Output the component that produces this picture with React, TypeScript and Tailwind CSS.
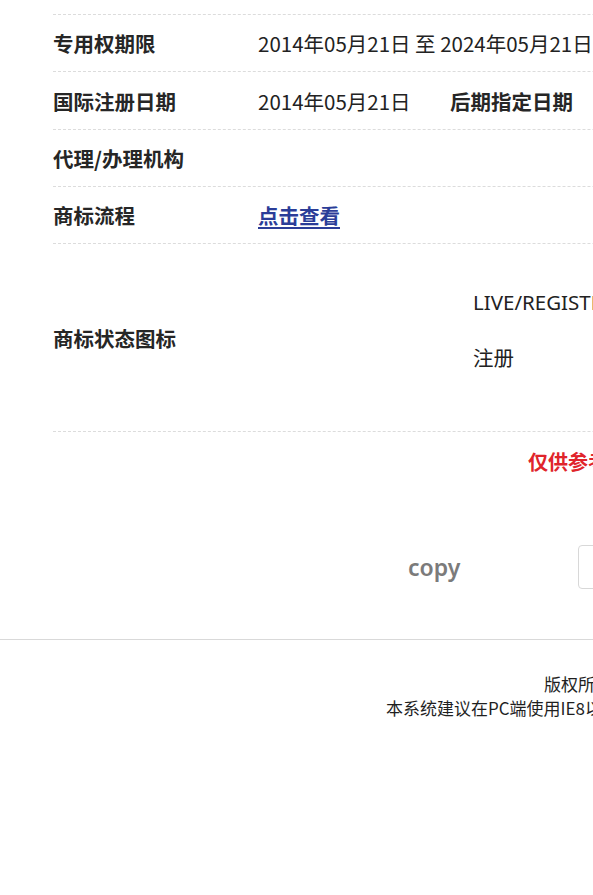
import React from "react";

const font = { fontFamily: '"Noto Sans", "Noto Sans CJK SC", sans-serif' };

function Row({ h, children }: { h: string; children: React.ReactNode }) {
  return (
    <div className={`flex items-center border-b border-dashed border-[#dcdcdc] ${h}`}>{children}</div>
  );
}

export default function App() {
  return (
    <div
      className="w-[593px] h-[895px] overflow-hidden bg-white text-[#222] whitespace-nowrap"
      style={{ fontFamily: '"Noto Sans CJK SC", "Noto Sans", sans-serif' }}
    >
      <div className="w-[1100px]">
        <div className="ml-[53px] mt-[14px] border-t border-dashed border-[#dcdcdc] text-[20.5px] leading-[28px]">
          <Row h="h-[57px]">
            <div className="w-[205px] font-bold text-[#262626]">专用权期限</div>
            <div>2014年05月21日 至 2024年05月21日</div>
          </Row>
          <Row h="h-[58px]">
            <div className="w-[205px] font-bold text-[#262626]">国际注册日期</div>
            <div className="w-[192px]">2014年05月21日</div>
            <div className="font-bold text-[#262626]">后期指定日期</div>
          </Row>
          <Row h="h-[57px]">
            <div className="w-[205px] font-bold text-[#262626]">代理/办理机构</div>
            <div></div>
          </Row>
          <Row h="h-[57px]">
            <div className="w-[205px] font-bold text-[#262626]">商标流程</div>
            <a className="font-bold text-[#2b3d98] underline underline-offset-[3px] cursor-pointer">点击查看</a>
          </Row>
          <div className="flex h-[188px] border-b border-dashed border-[#dcdcdc]">
            <div className="w-[205px] self-center font-bold text-[#262626]">商标状态图标</div>
            <div className="flex flex-col pl-[215px] pt-[44px]">
              <div style={font}>LIVE/REGISTERED</div>
              <div className="mt-[27px]">注册</div>
            </div>
          </div>
        </div>

        <div className="pl-[528px] mt-[16px] text-[20px] leading-[28px] font-bold text-[#e0242b]">
          仅供参考，不具有法律效力
        </div>

        <div className="flex items-center mt-[69px] h-[44px]">
          <div className="pl-[408px] w-[578px] text-[23px] font-semibold text-[#7b7b7b]" style={font}>
            copy
          </div>
          <div className="h-[44px] w-[120px] rounded-[4px] border border-[#d8d8d8] bg-white"></div>
        </div>

        <div className="mt-[50px] border-t border-[#d9d9d9]"></div>

        <div className="pt-[32px] text-[17px] leading-[24px] text-[#1f1f1f]">
          <div className="pl-[544px]">版权所有：国家知识产权局商标局 中国商标网</div>
          <div className="pl-[386px]">本系统建议在PC端使用IE8以上浏览器</div>
        </div>
      </div>
    </div>
  );
}
